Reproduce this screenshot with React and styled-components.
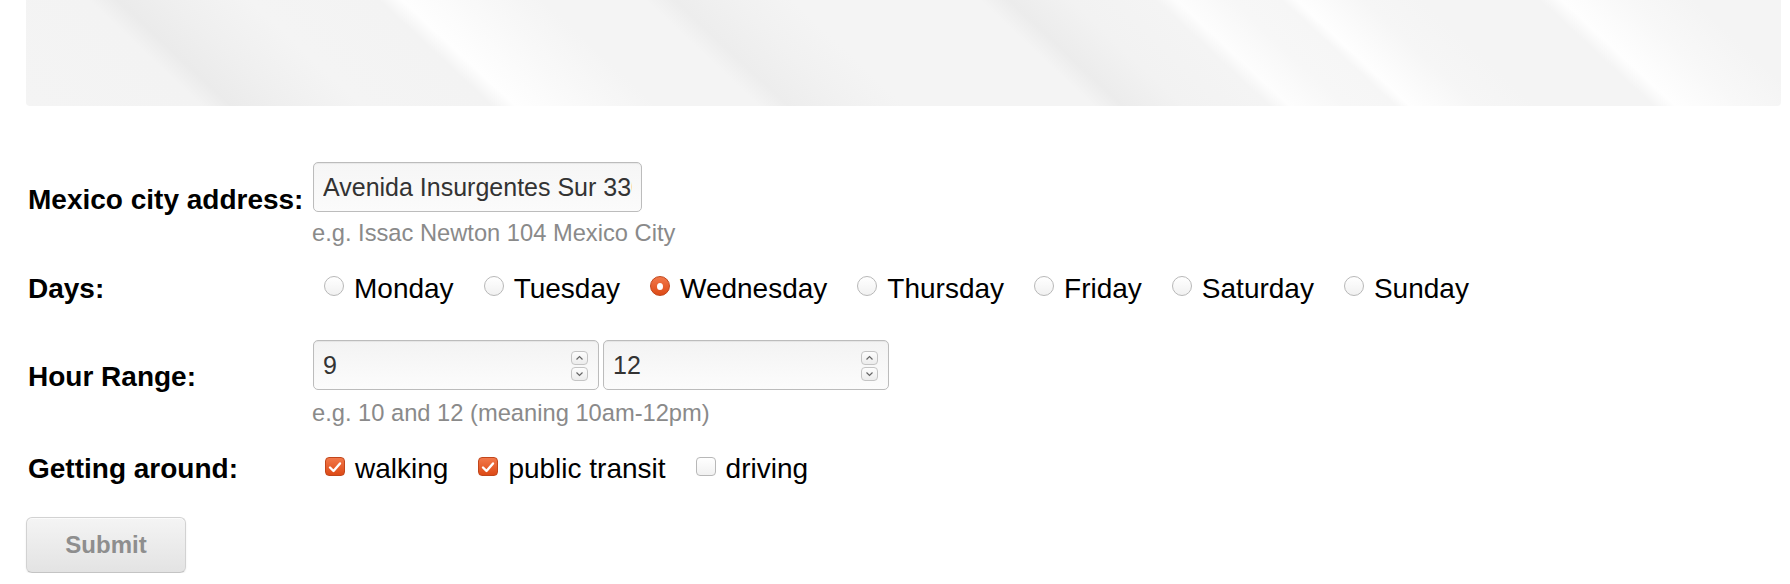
import React from "react";
import styled, { createGlobalStyle } from "styled-components";

const GlobalStyle = createGlobalStyle`
  html, body { margin: 0; padding: 0; background: #ffffff; }
  body { font-family: "Liberation Sans", Arial, sans-serif; color: #000; }
  * { box-sizing: border-box; }
`;

const Page = styled.div`
  padding: 0 9px 0 26px;
`;

const Banner = styled.div`
  height: 106px;
  border-radius: 0 0 4px 4px;
  background: linear-gradient(
    43deg,
    #f4f4f4 0px,
    #f3f3f3 120px,
    #ebebeb 140px,
    #efefef 175px,
    #f4f4f4 230px,
    #f3f3f3 318px,
    #fefefe 334px,
    #f9f9f9 380px,
    #f4f4f4 430px,
    #f4f4f4 500px,
    #ededed 520px,
    #f1f1f1 560px,
    #f4f4f4 600px,
    #f4f4f4 728px,
    #ececec 748px,
    #f2f2f2 790px,
    #f4f4f4 848px,
    #fdfdfd 862px,
    #f7f7f7 900px,
    #f6f6f6 934px,
    #fefefe 944px,
    #f6f6f6 990px,
    #f4f4f4 1030px,
    #f4f4f4 1110px,
    #fefefe 1125px,
    #f8f8f8 1170px,
    #f4f4f4 1215px
  );
`;

const Form = styled.form`
  padding-top: 56px;
`;

const Row = styled.div`
  display: grid;
  grid-template-columns: 287px 1fr;
  align-items: start;
  margin-top: ${(p) => p.$mt || 0}px;
`;

const Label = styled.label`
  font-weight: bold;
  font-size: 28px;
  line-height: 34px;
  padding-left: 2px;
  padding-top: ${(p) => p.$pt || 0}px;
  white-space: nowrap;
`;

const Field = styled.div`
  display: flex;
  flex-direction: column;
`;

const TextInput = styled.input`
  width: 329px;
  height: 50px;
  padding: 0 9px;
  border: 1px solid #bcbcbc;
  border-radius: 5px;
  background: linear-gradient(#f6f6f6, #fbfbfb);
  box-shadow: inset 0 1px 1px rgba(0, 0, 0, 0.06);
  font-family: "Liberation Sans", Arial, sans-serif;
  font-size: 25px;
  color: #333;
  outline: none;
`;

const Hint = styled.div`
  margin-top: ${(p) => p.$mt || 8}px;
  margin-left: -1px;
  font-size: 23.7px;
  line-height: 28px;
  color: #8a8a8a;
`;

const Options = styled.div`
  display: flex;
  gap: 30px;
  padding-left: ${(p) => p.$pl}px;
`;

const Option = styled.label`
  display: flex;
  align-items: flex-start;
  gap: 10px;
  font-size: 28px;
  line-height: 34px;
  color: #000;
  white-space: nowrap;
`;

const Radio = styled.span`
  width: 20px;
  height: 20px;
  margin-top: 4px;
  border-radius: 50%;
  flex: none;
  display: flex;
  align-items: center;
  justify-content: center;
  border: 1px solid ${(p) => (p.$checked ? "#c1461b" : "#b8b8b8")};
  background: ${(p) =>
    p.$checked
      ? "linear-gradient(#f2784a, #dd4a16)"
      : "linear-gradient(#ffffff, #f1f1f1)"};
  &::after {
    content: "";
    display: ${(p) => (p.$checked ? "block" : "none")};
    width: 6px;
    height: 7px;
    border-radius: 50%;
    background: #fff;
  }
`;

const Check = styled.span`
  width: 20px;
  height: 19px;
  margin-top: 5px;
  border-radius: 4px;
  flex: none;
  display: flex;
  align-items: center;
  justify-content: center;
  border: 1px solid ${(p) => (p.$checked ? "#c1461b" : "#b8b8b8")};
  background: ${(p) =>
    p.$checked
      ? "linear-gradient(#f2784a, #dd4a16)"
      : "linear-gradient(#ffffff, #f1f1f1)"};
`;

const HourInputs = styled.div`
  display: flex;
  gap: 4px;
`;

const NumberBox = styled.div`
  width: 286px;
  height: 50px;
  display: flex;
  align-items: center;
  padding: 0 10px 0 9px;
  border: 1px solid #bcbcbc;
  border-radius: 5px;
  background: linear-gradient(#f3f3f3, #fcfcfc);
  box-shadow: inset 0 1px 1px rgba(0, 0, 0, 0.06);
`;

const NumberField = styled.input`
  flex: 1;
  min-width: 0;
  border: none;
  background: transparent;
  padding: 0;
  font-family: "Liberation Sans", Arial, sans-serif;
  font-size: 25px;
  color: #333;
  outline: none;
`;

const Spinner = styled.div`
  display: flex;
  flex-direction: column;
  gap: 2px;
  margin-top: 1px;
`;

const SpinButton = styled.span`
  width: 17px;
  height: 14px;
  border: 1px solid #c4c4c4;
  border-radius: 4px;
  background: linear-gradient(#fdfdfd, #ececec);
  display: flex;
  align-items: center;
  justify-content: center;
`;

const SubmitButton = styled.button`
  margin-top: 31px;
  width: 160px;
  height: 56px;
  border: 1px solid #d2d2d2;
  border-bottom-color: #c4c4c4;
  border-radius: 6px;
  background: linear-gradient(#f4f4f4, #e3e3e3);
  box-shadow: inset 0 1px 0 rgba(255, 255, 255, 0.6), 0 1px 2px rgba(0, 0, 0, 0.08);
  font-family: "Liberation Sans", Arial, sans-serif;
  font-weight: bold;
  font-size: 24px;
  color: #8e8e8e;
  padding: 0;
`;

const Chevron = ({ up }) => (
  <svg width="9" height="6" viewBox="0 0 9 6">
    <path
      d={up ? "M1.5 4.5 L4.5 1.5 L7.5 4.5" : "M1.5 1.5 L4.5 4.5 L7.5 1.5"}
      fill="none"
      stroke="#666"
      strokeWidth="1.2"
    />
  </svg>
);

const Tick = () => (
  <svg width="14" height="12" viewBox="0 0 14 12">
    <path
      d="M2 6.5 L5.5 10 L12 2.5"
      fill="none"
      stroke="#fff"
      strokeWidth="2.4"
      strokeLinecap="round"
      strokeLinejoin="round"
    />
  </svg>
);

const days = [
  "Monday",
  "Tuesday",
  "Wednesday",
  "Thursday",
  "Friday",
  "Saturday",
  "Sunday",
];

const modes = [
  { name: "walking", checked: true },
  { name: "public transit", checked: true },
  { name: "driving", checked: false },
];

const NumberInput = ({ value }) => (
  <NumberBox>
    <NumberField type="text" defaultValue={value} />
    <Spinner>
      <SpinButton>
        <Chevron up />
      </SpinButton>
      <SpinButton>
        <Chevron />
      </SpinButton>
    </Spinner>
  </NumberBox>
);

export default function App() {
  return (
    <>
      <GlobalStyle />
      <Page>
        <Banner />
        <Form onSubmit={(e) => e.preventDefault()}>
          <Row>
            <Label $pt={21}>Mexico city address:</Label>
            <Field>
              <TextInput type="text" defaultValue="Avenida Insurgentes Sur 3300" />
              <Hint $mt={7}>e.g. Issac Newton 104 Mexico City</Hint>
            </Field>
          </Row>
          <Row $mt={25}>
            <Label>Days:</Label>
            <Options $pl={11}>
              {days.map((d) => (
                <Option key={d}>
                  <Radio $checked={d === "Wednesday"} />
                  {d}
                </Option>
              ))}
            </Options>
          </Row>
          <Row $mt={34}>
            <Label $pt={20}>Hour Range:</Label>
            <Field>
              <HourInputs>
                <NumberInput value="9" />
                <NumberInput value="12" />
              </HourInputs>
              <Hint $mt={9}>e.g. 10 and 12 (meaning 10am-12pm)</Hint>
            </Field>
          </Row>
          <Row $mt={25}>
            <Label>Getting around:</Label>
            <Options $pl={12}>
              {modes.map((m) => (
                <Option key={m.name}>
                  <Check $checked={m.checked}>{m.checked && <Tick />}</Check>
                  {m.name}
                </Option>
              ))}
            </Options>
          </Row>
          <SubmitButton type="submit" disabled>
            Submit
          </SubmitButton>
        </Form>
      </Page>
    </>
  );
}
